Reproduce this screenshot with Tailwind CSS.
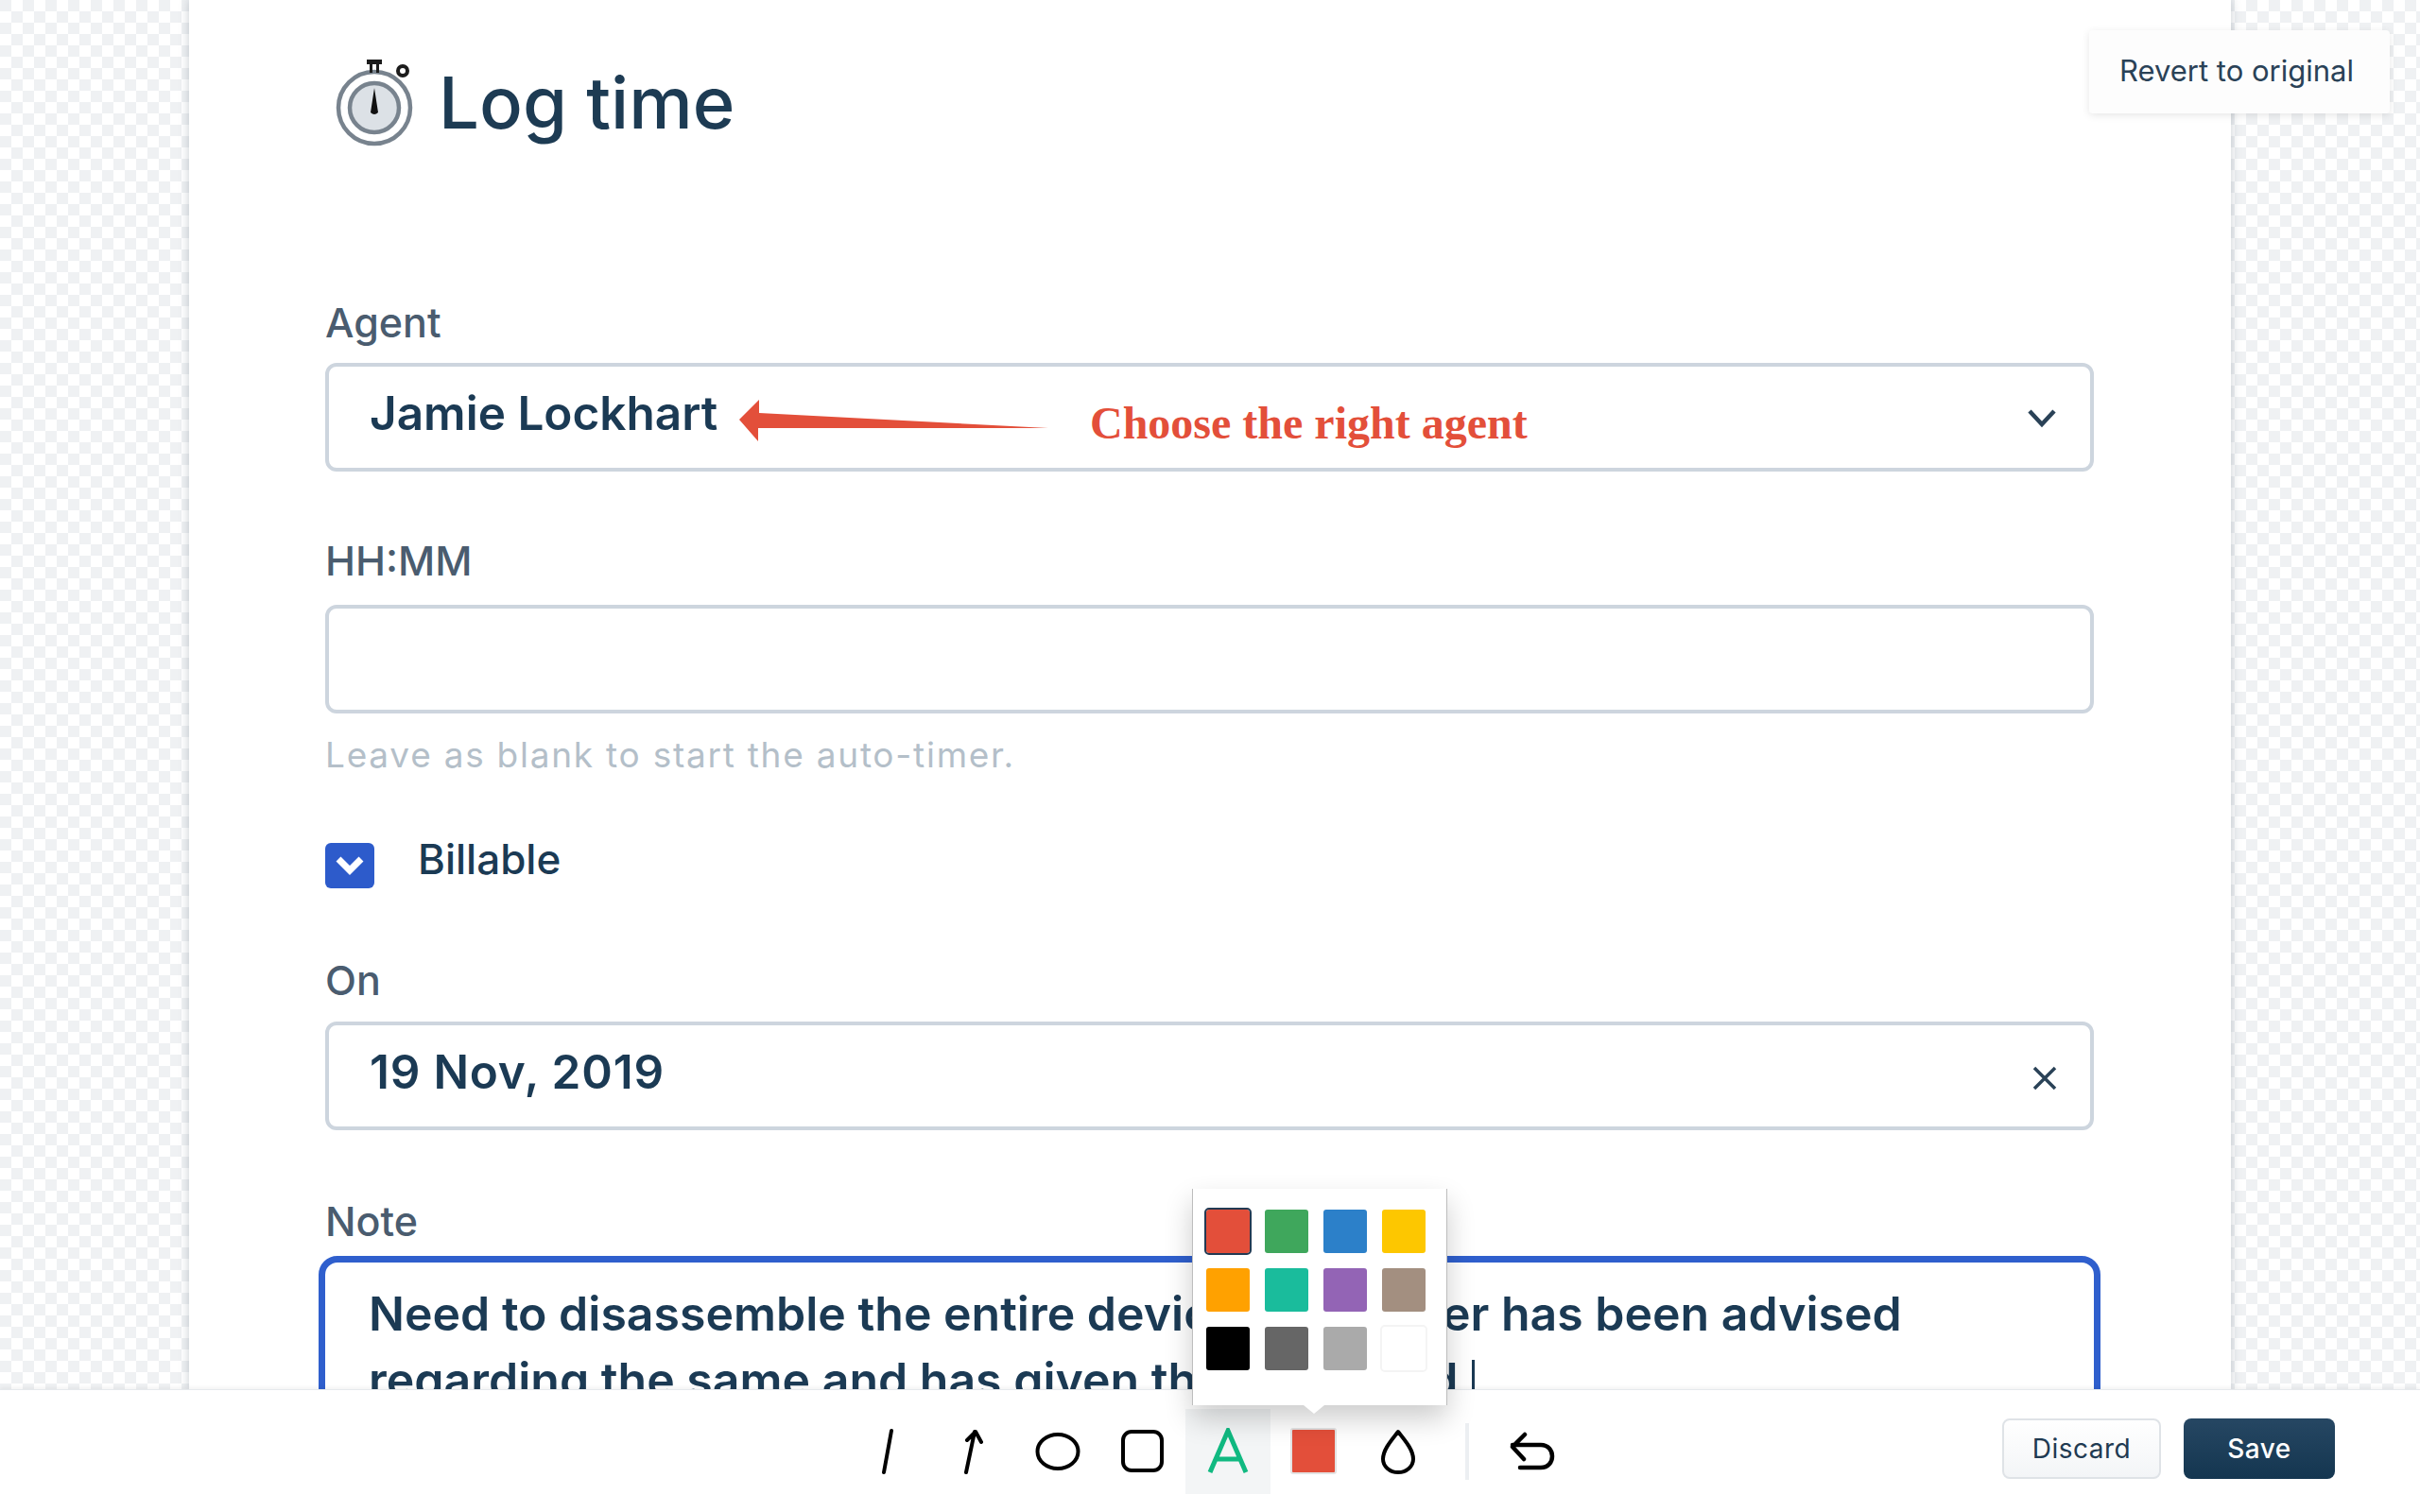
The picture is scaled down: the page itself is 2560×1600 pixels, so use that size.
<!DOCTYPE html>
<html lang="en">
<head>
    <meta charset="UTF-8">
    <title>Log time</title>
    <script src="https://cdn.jsdelivr.net/npm/@tailwindcss/browser@4"></script>
</head>
<body class="font-['Inter',sans-serif] bg-white">
<div class="relative w-[2560px] h-[1600px] overflow-hidden flex flex-col">

    <!-- page behind the annotation toolbar -->
    <div class="h-[1470px] overflow-hidden bg-[repeating-conic-gradient(#eff1f3_0_25%,#ffffff_0_50%)] bg-[size:24px_24px] bg-[position:12px_0]">
        <div class="ml-[200px] w-[2160px] h-[1470px] bg-white shadow-[0_0_10px_rgba(90,105,120,0.35)] pl-[144px] pr-[145px] text-[#1b3a54]">
            <div class="flex items-center h-[100px] pt-[58px] box-content">
                <svg class="w-[100px] h-[110px] ml-[6px]" viewBox="0 0 100 110" fill="none">
                    <circle cx="46" cy="61" r="38" stroke="#78838e" stroke-width="4.500"/>
                    <circle cx="46" cy="61" r="26" fill="#dce1e6" stroke="#78838e" stroke-width="4.500"/>
                    <path d="M38 10h16v5h-3v9h-3v-9h-4v9h-3v-9h-3z" fill="#1c1c1c"/>
                    <circle cx="76" cy="22" r="5" stroke="#1c1c1c" stroke-width="4"/>
                    <path d="M46 40l4 26q-4 4-8 0z" fill="#111"/>
                </svg>
                <h1 class="ml-[14px] text-[76px] leading-[100px] font-medium text-[#1d3b53]">Log time</h1>
            </div>

            <label class="block mt-[158px] h-[50px] text-[43px] leading-[50px] font-medium text-[#4a5c6f]">Agent</label>
            <div class="relative mt-[18px] h-[115px] border-4 border-[#cdd5de] rounded-[12px] flex items-center justify-between pl-[43px] pr-[35px]">
                <span class="text-[49.500px] font-[560] -translate-y-[4px]">Jamie Lockhart</span>
                <svg class="w-[32px] h-[22px] translate-y-[1px]" viewBox="0 0 32 22" fill="none"><path d="M3 3l13 14L29 3" stroke="#2a4257" stroke-width="4.500"/></svg>
                <svg class="absolute left-[434px] top-[34px] w-[330px] h-[45px]" viewBox="0 0 330 45"><path d="M0 22L21 1v14l306 16-307 0v14z" fill="#e34f3a"/></svg>
                <span class="absolute left-[805px] top-[30px] font-['Liberation_Serif',serif] font-bold text-[48px] leading-[60px] text-[#e34f3a]">Choose the right agent</span>
            </div>

            <label class="block mt-[69px] h-[50px] text-[43px] leading-[50px] font-medium text-[#4a5c6f]">HH:MM</label>
            <div class="mt-[22px] h-[115px] border-4 border-[#cdd5de] rounded-[12px]"></div>
            <p class="mt-[22px] h-[44px] text-[37px] leading-[44px] tracking-[1.750px] text-[#b4bfc9]">Leave as blank to start the auto-timer.</p>

            <div class="flex mt-[71px] h-[48px]">
                <span class="w-[52px] h-[48px] rounded-[6px] bg-[#2d5bcb] flex items-center justify-center">
                    <svg class="w-[32px] h-[24px]" viewBox="0 0 32 24" fill="none"><path d="M4 5l12 12L28 5" stroke="#fff" stroke-width="7"/></svg>
                </span>
                <span class="ml-[46px] -translate-y-[3px] text-[44px] leading-[40px] font-medium">Billable</span>
            </div>

            <label class="block mt-[72px] h-[50px] text-[43px] leading-[50px] font-medium text-[#4a5c6f]">On</label>
            <div class="mt-[19px] h-[115px] border-4 border-[#cdd5de] rounded-[12px] flex items-center justify-between pl-[43px] pr-[35px]">
                <span class="text-[49.500px] tracking-[0.800px] font-[560] -translate-y-[4px]">19 Nov, 2019</span>
                <svg class="w-[26px] h-[26px] translate-y-[2px]" viewBox="0 0 26 26" fill="none"><path d="M2 2l22 22M24 2L2 24" stroke="#2a4257" stroke-width="3.500"/></svg>
            </div>

            <label class="block mt-[71px] h-[50px] text-[43px] leading-[50px] font-medium text-[#4a5c6f]">Note</label>
            <div class="-mx-[7px] mt-[12px] h-[400px] border-[7px] border-[#2f5fcd] rounded-[20px] pl-[46px] pr-[40px] pt-[19px] text-[50px] leading-[70px] font-[560]">
                Need to disassemble the entire device. Customer has been advised<br>regarding the same and has given the go-ahead <span class="inline-block w-[3px] h-[50px] ml-[2px] bg-[#1b3a54] align-middle"></span>
            </div>
        </div>
    </div>

    <!-- annotation toolbar -->
    <div class="relative h-[130px] bg-white border-t border-[#e6e9ec] shadow-[0_-2px_4px_rgba(0,0,0,0.05)] flex items-center">
        <div class="flex items-center h-[90px] ml-[894px]">
            <button class="w-[90px] h-[90px] flex items-center justify-center">
                <svg class="w-[50px] h-[50px]" viewBox="0 0 50 50" fill="none"><path d="M29 3L21 47" stroke="#000" stroke-width="4" stroke-linecap="round"/></svg>
            </button>
            <button class="w-[90px] h-[90px] flex items-center justify-center">
                <svg class="w-[50px] h-[50px]" viewBox="0 0 50 50" fill="none" stroke="#000" stroke-width="4" stroke-linecap="round" stroke-linejoin="round"><path d="M18 47L27 4M19 13l9-9 6 11"/></svg>
            </button>
            <button class="w-[90px] h-[90px] flex items-center justify-center">
                <svg class="w-[50px] h-[50px]" viewBox="0 0 50 50" fill="none"><ellipse cx="25" cy="25" rx="21.500" ry="18" stroke="#000" stroke-width="4"/></svg>
            </button>
            <button class="w-[90px] h-[90px] flex items-center justify-center">
                <svg class="w-[50px] h-[50px]" viewBox="0 0 50 50" fill="none"><rect x="4" y="4" width="41" height="41" rx="9" stroke="#000" stroke-width="4"/></svg>
            </button>
            <button class="w-[90px] h-[90px] flex items-center justify-center bg-[#f3f5f6]">
                <svg class="w-[50px] h-[50px]" viewBox="0 0 50 50" fill="none" stroke="#10b981" stroke-width="5"><path d="M6 47L25 3l19 44M12 33h26"/></svg>
            </button>
            <button class="w-[90px] h-[90px] flex items-center justify-center">
                <span class="w-[49px] h-[49px] rounded-[3px] bg-[#e34f3a] border-2 border-[#e3e3e3]"></span>
            </button>
            <button class="w-[90px] h-[90px] flex items-center justify-center">
                <svg class="w-[50px] h-[50px]" viewBox="0 0 50 50" fill="none"><path d="M25 4C32 13 41 23 41 33A16 14 0 0 1 9 33C9 23 18 13 25 4Z" stroke="#000" stroke-width="4" stroke-linejoin="round"/></svg>
            </button>
            <span class="ml-[26px] w-[4px] h-[60px] bg-[#eceff2]"></span>
            <button class="ml-[21px] w-[90px] h-[90px] flex items-center justify-center">
                <svg class="w-[52px] h-[50px] translate-x-[2px]" viewBox="0 0 52 50" fill="none" stroke="#000" stroke-width="4.500" stroke-linecap="round" stroke-linejoin="round"><path d="M17 7L4 20l12 13M4 18h30c16 0 16 24 0 24H12"/></svg>
            </button>
        </div>
        <div class="ml-auto mr-[90px] mb-[6px] flex gap-[24px]">
            <button class="w-[168px] h-[64px] rounded-[8px] border-2 border-[#dfe3e7] bg-linear-to-b from-white to-[#f3f5f7] text-[28px] tracking-[0.5px] text-[#1f3a52]">Discard</button>
            <button class="w-[160px] h-[64px] rounded-[8px] bg-linear-to-b from-[#264763] to-[#143650] text-[28px] tracking-[0.5px] font-medium text-white">Save</button>
        </div>
    </div>

    <!-- revert button sits over the card edge -->
    <button class="absolute left-[2210px] top-[32px] w-[318px] h-[88px] pl-[32px] pb-[2px] text-left bg-[#fdfdfd] rounded-[4px] shadow-[0_2px_8px_rgba(0,0,0,0.1)] text-[31px] text-[#2a4257]">Revert to original</button>

    <!-- colour picker popover -->
    <div class="absolute left-[1261px] top-[1258px] w-[270px] h-[229px] bg-white border-x border-[#bdbdbd] shadow-[0_14px_28px_rgba(0,0,0,0.2)] pl-[14px] pt-[22px]">
        <div class="grid grid-cols-[46px_46px_46px_46px] gap-x-[16px] gap-y-[16px]">
            <span class="h-[46px] rounded-[3px] bg-[#e34f3a] outline-2 outline-[#233a53]"></span>
            <span class="h-[46px] rounded-[3px] bg-[#3fa75c]"></span>
            <span class="h-[46px] rounded-[3px] bg-[#2c80c9]"></span>
            <span class="h-[46px] rounded-[3px] bg-[#fdc700]"></span>
            <span class="h-[46px] rounded-[3px] bg-[#ffa100]"></span>
            <span class="h-[46px] rounded-[3px] bg-[#1abc9c]"></span>
            <span class="h-[46px] rounded-[3px] bg-[#9364b5]"></span>
            <span class="h-[46px] rounded-[3px] bg-[#a38f80]"></span>
            <span class="h-[46px] rounded-[3px] bg-black"></span>
            <span class="h-[46px] rounded-[3px] bg-[#666666]"></span>
            <span class="h-[46px] rounded-[3px] bg-[#aaaaaa]"></span>
            <span class="h-[46px] rounded-[3px] bg-white outline-2 outline-[#f4f4f4]"></span>
        </div>
        <span class="absolute left-[117px] top-[229px] w-0 h-0 border-x-[11px] border-x-transparent border-t-[9px] border-t-white"></span>
    </div>
</div>
</body>
</html>
